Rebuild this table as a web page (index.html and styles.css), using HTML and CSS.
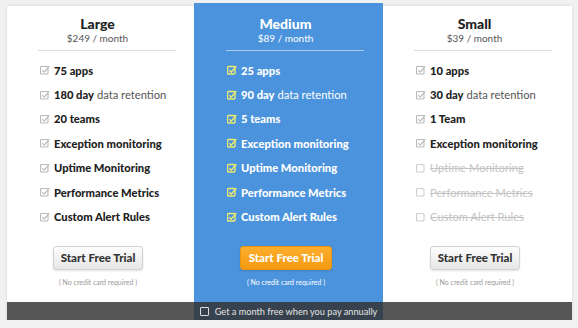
FILE: index.html
```html
<!DOCTYPE html>
<html>
  <head>
    <title>Pricing</title>
    <link rel="stylesheet" href="styles.css">
  </head>
  <body>
    <div class="pricing">
      <div class="plan">
        <div class="plan-head">
          <p class="plan-name">Large</p>
          <p class="plan-price">$249 / month</p>
        </div>
        <ul class="features">
          <li><svg class="tick" viewBox="0 0 10 10"><rect x="0.5" y="1.5" width="7.5" height="7.5" rx="1"/><path d="M2.3 5.2 L4.2 7.1 L9.3 1.2"/></svg><b>75 apps</b></li>
          <li><svg class="tick" viewBox="0 0 10 10"><rect x="0.5" y="1.5" width="7.5" height="7.5" rx="1"/><path d="M2.3 5.2 L4.2 7.1 L9.3 1.2"/></svg><b>180 day</b>&nbsp;data retention</li>
          <li><svg class="tick" viewBox="0 0 10 10"><rect x="0.5" y="1.5" width="7.5" height="7.5" rx="1"/><path d="M2.3 5.2 L4.2 7.1 L9.3 1.2"/></svg><b>20 teams</b></li>
          <li><svg class="tick" viewBox="0 0 10 10"><rect x="0.5" y="1.5" width="7.5" height="7.5" rx="1"/><path d="M2.3 5.2 L4.2 7.1 L9.3 1.2"/></svg><b>Exception monitoring</b></li>
          <li><svg class="tick" viewBox="0 0 10 10"><rect x="0.5" y="1.5" width="7.5" height="7.5" rx="1"/><path d="M2.3 5.2 L4.2 7.1 L9.3 1.2"/></svg><b>Uptime Monitoring</b></li>
          <li><svg class="tick" viewBox="0 0 10 10"><rect x="0.5" y="1.5" width="7.5" height="7.5" rx="1"/><path d="M2.3 5.2 L4.2 7.1 L9.3 1.2"/></svg><b>Performance Metrics</b></li>
          <li><svg class="tick" viewBox="0 0 10 10"><rect x="0.5" y="1.5" width="7.5" height="7.5" rx="1"/><path d="M2.3 5.2 L4.2 7.1 L9.3 1.2"/></svg><b>Custom Alert Rules</b></li>
        </ul>
        <div class="trial">
          <a class="trial-button">Start Free Trial</a>
          <p class="trial-note">( No credit card required )</p>
        </div>
      </div>

      <div class="plan plan-featured">
        <div class="plan-head">
          <p class="plan-name">Medium</p>
          <p class="plan-price">$89 / month</p>
        </div>
        <ul class="features">
          <li><svg class="tick" viewBox="0 0 10 10"><rect x="0.5" y="1.5" width="7.5" height="7.5" rx="1"/><path d="M2.3 5.2 L4.2 7.1 L9.3 1.2"/></svg><b>25 apps</b></li>
          <li><svg class="tick" viewBox="0 0 10 10"><rect x="0.5" y="1.5" width="7.5" height="7.5" rx="1"/><path d="M2.3 5.2 L4.2 7.1 L9.3 1.2"/></svg><b>90 day</b>&nbsp;data retention</li>
          <li><svg class="tick" viewBox="0 0 10 10"><rect x="0.5" y="1.5" width="7.5" height="7.5" rx="1"/><path d="M2.3 5.2 L4.2 7.1 L9.3 1.2"/></svg><b>5 teams</b></li>
          <li><svg class="tick" viewBox="0 0 10 10"><rect x="0.5" y="1.5" width="7.5" height="7.5" rx="1"/><path d="M2.3 5.2 L4.2 7.1 L9.3 1.2"/></svg><b>Exception monitoring</b></li>
          <li><svg class="tick" viewBox="0 0 10 10"><rect x="0.5" y="1.5" width="7.5" height="7.5" rx="1"/><path d="M2.3 5.2 L4.2 7.1 L9.3 1.2"/></svg><b>Uptime Monitoring</b></li>
          <li><svg class="tick" viewBox="0 0 10 10"><rect x="0.5" y="1.5" width="7.5" height="7.5" rx="1"/><path d="M2.3 5.2 L4.2 7.1 L9.3 1.2"/></svg><b>Performance Metrics</b></li>
          <li><svg class="tick" viewBox="0 0 10 10"><rect x="0.5" y="1.5" width="7.5" height="7.5" rx="1"/><path d="M2.3 5.2 L4.2 7.1 L9.3 1.2"/></svg><b>Custom Alert Rules</b></li>
        </ul>
        <div class="trial">
          <a class="trial-button">Start Free Trial</a>
          <p class="trial-note">( No credit card required )</p>
        </div>
      </div>

      <div class="plan">
        <div class="plan-head">
          <p class="plan-name">Small</p>
          <p class="plan-price">$39 / month</p>
        </div>
        <ul class="features">
          <li><svg class="tick" viewBox="0 0 10 10"><rect x="0.5" y="1.5" width="7.5" height="7.5" rx="1"/><path d="M2.3 5.2 L4.2 7.1 L9.3 1.2"/></svg><b>10 apps</b></li>
          <li><svg class="tick" viewBox="0 0 10 10"><rect x="0.5" y="1.5" width="7.5" height="7.5" rx="1"/><path d="M2.3 5.2 L4.2 7.1 L9.3 1.2"/></svg><b>30 day</b>&nbsp;data retention</li>
          <li><svg class="tick" viewBox="0 0 10 10"><rect x="0.5" y="1.5" width="7.5" height="7.5" rx="1"/><path d="M2.3 5.2 L4.2 7.1 L9.3 1.2"/></svg><b>1 Team</b></li>
          <li><svg class="tick" viewBox="0 0 10 10"><rect x="0.5" y="1.5" width="7.5" height="7.5" rx="1"/><path d="M2.3 5.2 L4.2 7.1 L9.3 1.2"/></svg><b>Exception monitoring</b></li>
          <li class="missing"><svg class="tick" viewBox="0 0 10 10"><rect x="0.5" y="1.5" width="7.5" height="7.5" rx="1"/></svg><span>Uptime Monitoring</span></li>
          <li class="missing"><svg class="tick" viewBox="0 0 10 10"><rect x="0.5" y="1.5" width="7.5" height="7.5" rx="1"/></svg><span>Performance Metrics</span></li>
          <li class="missing"><svg class="tick" viewBox="0 0 10 10"><rect x="0.5" y="1.5" width="7.5" height="7.5" rx="1"/></svg><span>Custom Alert Rules</span></li>
        </ul>
        <div class="trial">
          <a class="trial-button">Start Free Trial</a>
          <p class="trial-note">( No credit card required )</p>
        </div>
      </div>

      <div class="annual"></div>
      <div class="annual annual-featured">
        <label class="annual-label"><span class="annual-box"></span>Get a month free when you pay annually</label>
      </div>
      <div class="annual"></div>
    </div>
  </body>
</html>
```

FILE: styles.css
```css
body {
  margin: 0;
  background-color: #f1f1f1;
  font-family: Lato, "Open Sans", sans-serif;
}
.pricing {
  display: grid;
  grid-template-columns: 187px 189px 189px;
  grid-template-rows: 296px 18px;
  margin: 6px 6px 0 7px;
  background-color: #ffffff;
  box-shadow: 0 0 3px rgba(0, 0, 0, 0.12);
}
.plan {
  display: flex;
  flex-direction: column;
  padding-top: 10px;
  color: #222222;
}
.plan-featured {
  margin-top: -3px;
  padding-top: 13px;
  background-color: #4b93dc;
  color: #ffffff;
}
.plan-head {
  padding-right: 6px;
  text-align: center;
}
.plan-name {
  margin: 0;
  font-size: 14px;
  font-weight: 900;
  line-height: 16px;
}
.plan-price {
  margin: 0;
  font-size: 10px;
  line-height: 12px;
  color: #555555;
}
.plan-featured .plan-price {
  color: #ffffff;
}
.plan-head::after {
  content: '';
  display: block;
  width: 138px;
  margin: 6px 0 0 31px;
  border-top: 1px solid #dcdcdc;
}
.plan-featured .plan-head::after {
  margin-left: 32px;
  border-top-color: #a9cbef;
}
.features {
  list-style: none;
  margin: 7px 0 0 0;
  padding: 0 0 0 33px;
}
.features li {
  display: flex;
  align-items: center;
  height: 24.4px;
  font-size: 11.2px;
  color: #555555;
  white-space: nowrap;
}
.features b {
  font-weight: 900;
  color: #222222;
}
.plan-featured .features li,
.plan-featured .features b {
  color: #ffffff;
}
.tick {
  flex: none;
  width: 10px;
  height: 10px;
  margin-right: 4px;
  fill: none;
  stroke: #b9b9b9;
  stroke-width: 1.1;
}
.plan-featured .tick {
  stroke: #ecea72;
  stroke-width: 1.4;
}
.features .missing {
  color: #c4c4c4;
  text-decoration: line-through;
}
.missing .tick {
  stroke: #cfcfcf;
}
.trial {
  margin-top: 17px;
  padding-right: 5px;
  text-align: center;
}
.trial-button {
  display: inline-block;
  width: 88px;
  height: 22px;
  line-height: 22px;
  border: 1px solid #d2d2d2;
  border-radius: 3px;
  background: linear-gradient(#fdfdfd, #e6e6e6);
  box-shadow: 0 1px 2px rgba(0, 0, 0, 0.12);
  font-size: 11.5px;
  font-weight: 900;
  color: #333333;
  cursor: pointer;
}
.plan-featured .trial-button {
  width: 90px;
  border-color: #e8940f;
  background: linear-gradient(#fcae2c, #f59a12);
  color: #ffffff;
}
.trial-note {
  margin: 7px 0 0 0;
  font-size: 7px;
  line-height: 10px;
  color: #999999;
}
.plan-featured .trial-note {
  color: #ffffff;
}
.annual {
  background-color: #565656;
}
.annual-featured {
  display: flex;
  align-items: center;
  justify-content: center;
  background-color: #38424e;
}
.annual-label {
  display: flex;
  align-items: center;
  font-size: 9.2px;
  color: #e4e4e4;
  white-space: nowrap;
}
.annual-box {
  width: 7px;
  height: 7px;
  margin-right: 6px;
  border: 1px solid #dddddd;
  border-radius: 1px;
}
```
